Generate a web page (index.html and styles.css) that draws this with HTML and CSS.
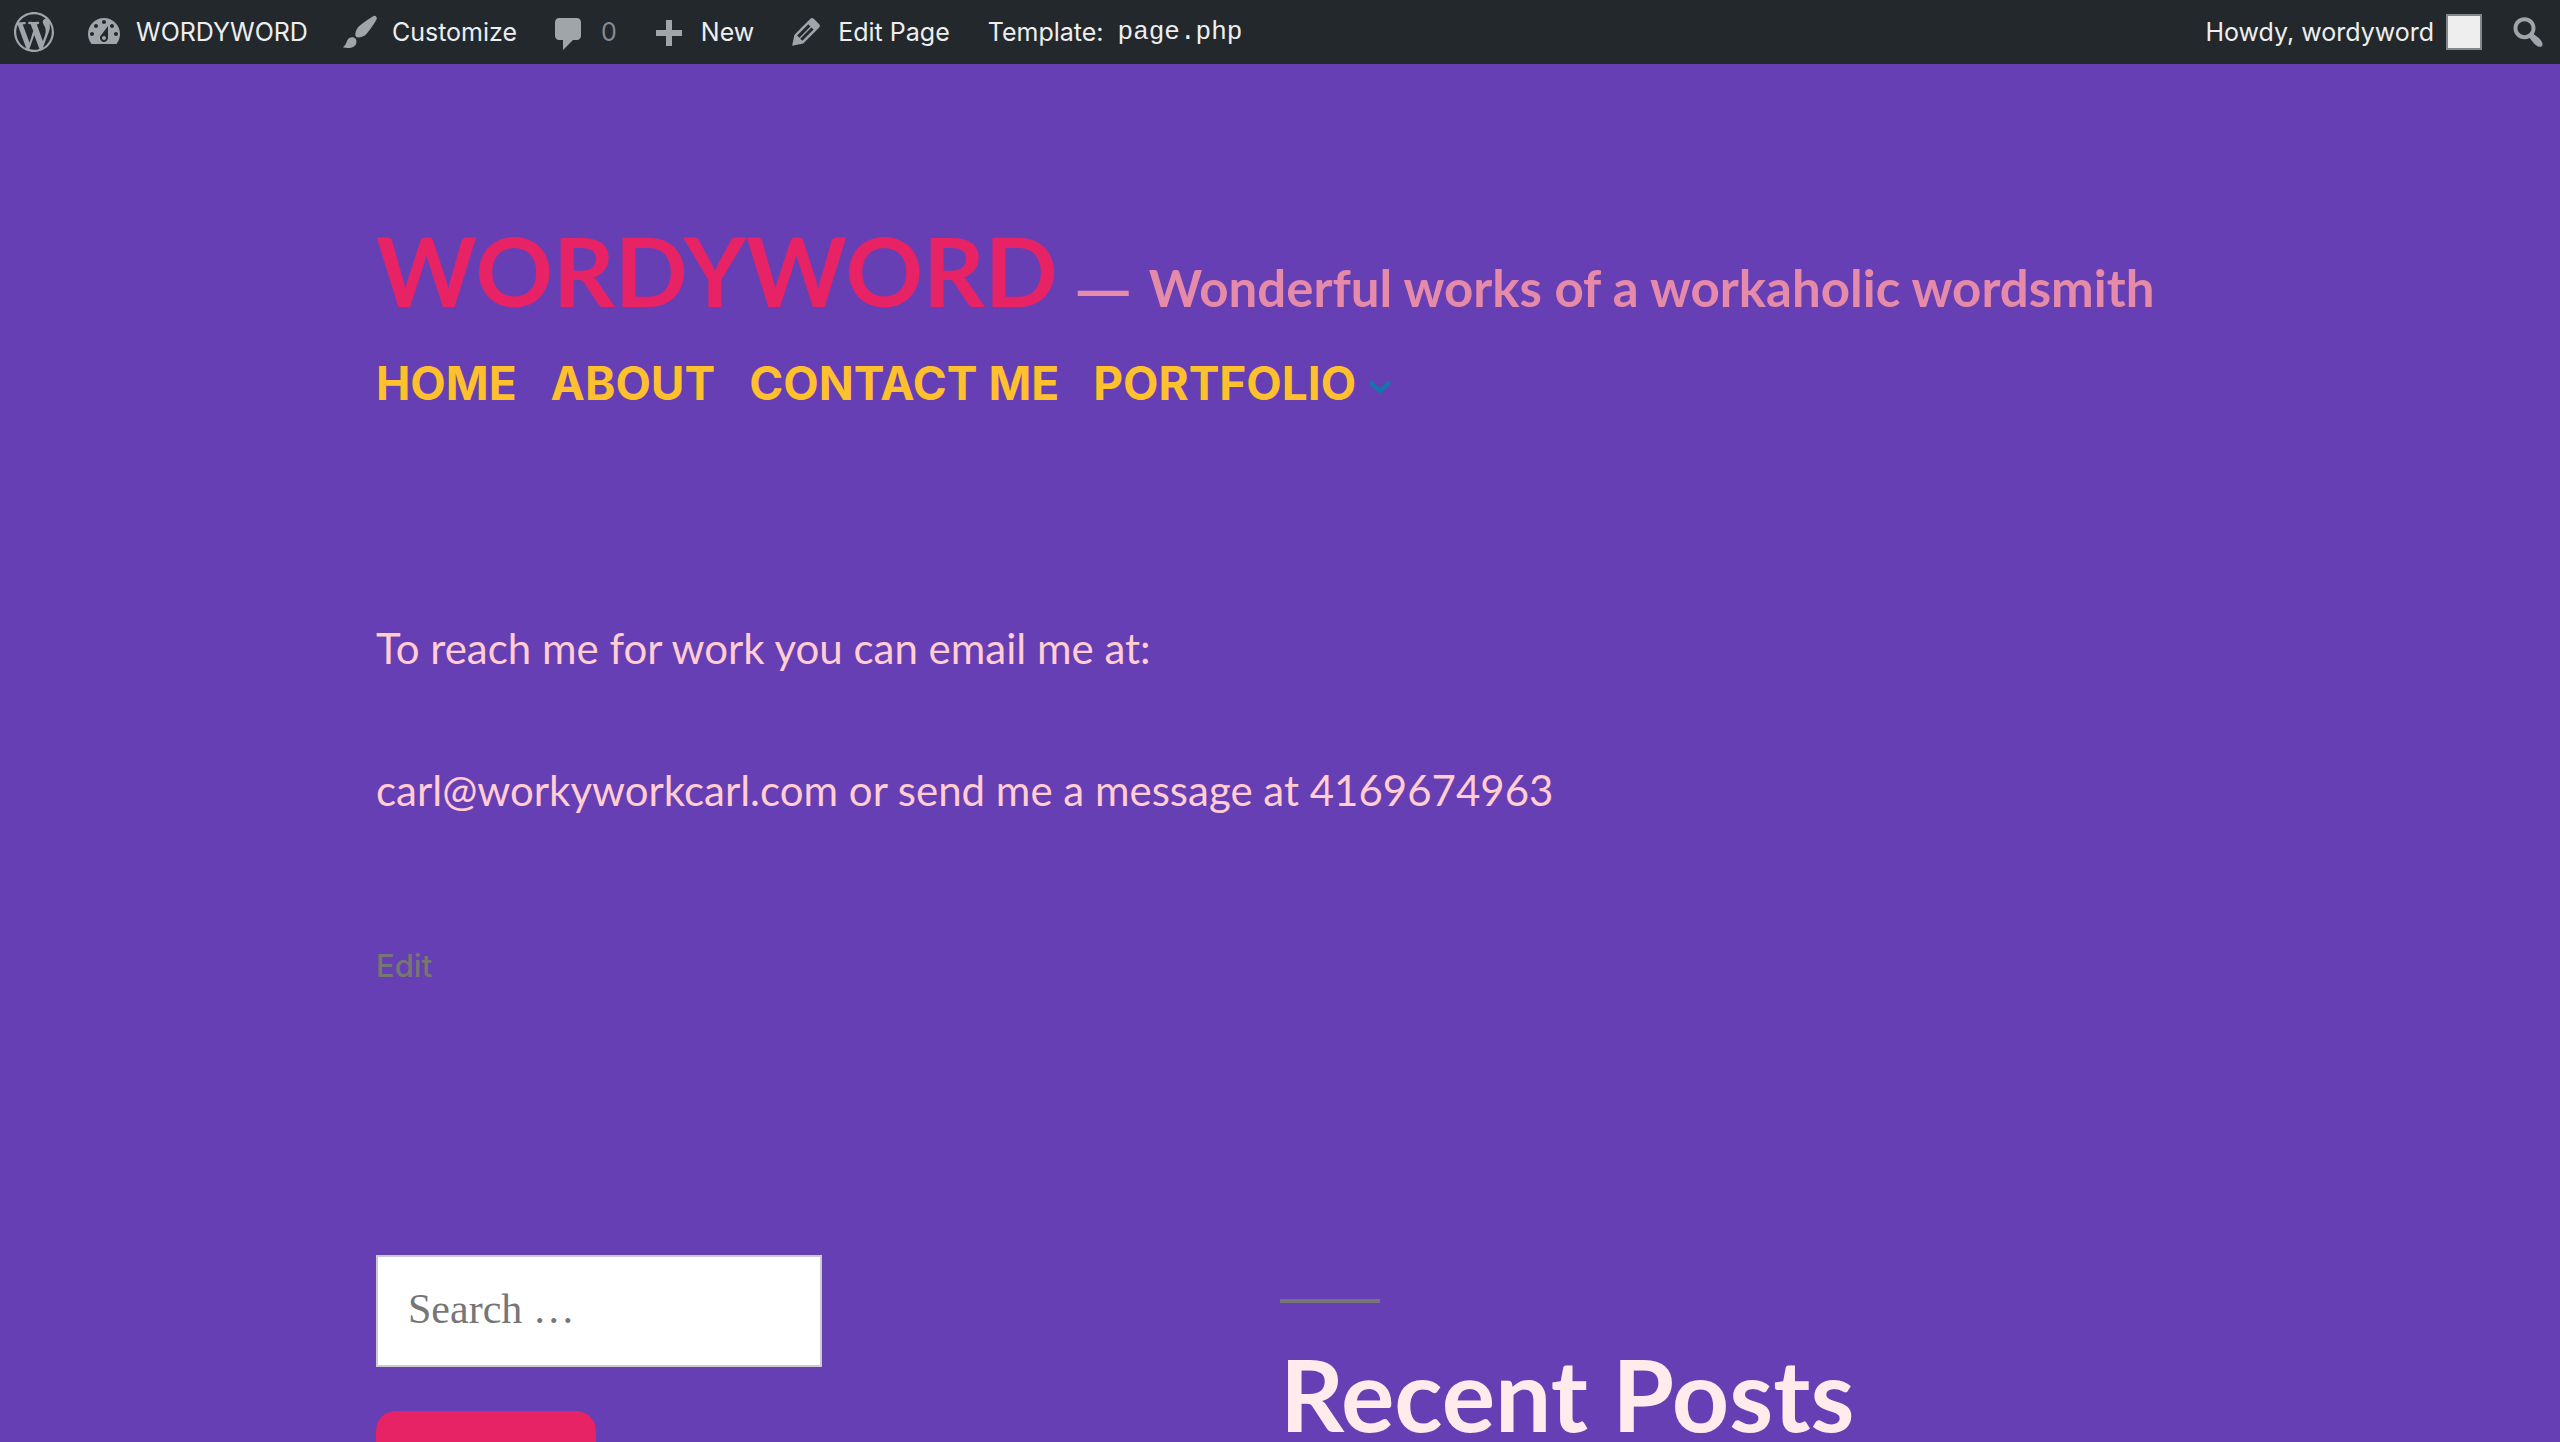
FILE: index.html
```html
<!DOCTYPE html>
<html lang="en">
<head>
<meta charset="utf-8">
<title>Contact Me – WORDYWORD</title>
<link rel="stylesheet" href="styles.css">
</head>
<body>
<nav class="adminbar" aria-label="Toolbar">
  <a class="bar-item logo" href="#" aria-label="About WordPress"><svg class="icon" viewBox="0 0 20 20"><path d="M20 10c0-5.51-4.49-10-10-10C4.48 0 0 4.49 0 10c0 5.52 4.48 10 10 10 5.51 0 10-4.48 10-10zM7.78 15.37L4.37 6.22c.55-.02 1.17-.08 1.17-.08.5-.06.44-1.13-.06-1.11 0 0-1.45.11-2.37.11-.18 0-.37 0-.58-.01C4.12 2.69 6.87 1.11 10 1.11c2.33 0 4.45.87 6.05 2.34-.68-.11-1.65.39-1.65 1.58 0 .74.45 1.36.9 2.1.35.61.55 1.36.55 2.46 0 1.49-1.4 5-1.4 5l-3.03-8.37c.54-.02.82-.17.82-.17.5-.05.44-1.25-.06-1.22 0 0-1.44.12-2.38.12-.87 0-2.33-.12-2.33-.12-.5-.03-.56 1.2-.06 1.22l.92.08 1.26 3.41zM17.41 10c.24-.64.74-1.87.43-4.25.7 1.29 1.05 2.71 1.05 4.25 0 3.29-1.73 6.24-4.4 7.78.97-2.59 1.94-5.2 2.92-7.78zM6.1 18.09C3.12 16.65 1.11 13.53 1.11 10c0-1.3.23-2.48.72-3.59C3.25 10.3 4.67 14.2 6.1 18.09zm4.03-6.63l2.58 6.98c-.86.29-1.76.45-2.71.45-.79 0-1.57-.11-2.29-.33.81-2.38 1.62-4.74 2.42-7.1z"/></svg></a>
  <a class="bar-item" href="#"><svg class="icon" viewBox="0 0 20 20"><path d="M3.76 16h12.48c1.1-1.37 1.76-3.11 1.76-5 0-4.42-3.58-8-8-8s-8 3.58-8 8c0 1.89.66 3.63 1.76 5zM10 4c.55 0 1 .45 1 1s-.45 1-1 1-1-.45-1-1 .45-1 1-1zM6 6c.55 0 1 .45 1 1s-.45 1-1 1-1-.45-1-1 .45-1 1-1zm8 0c.55 0 1 .45 1 1s-.45 1-1 1-1-.45-1-1 .45-1 1-1zm-5.37 5.55L12 7v6c0 1.1-.9 2-2 2s-2-.9-2-2c0-.57.24-1.08.63-1.45zM4 10c.55 0 1 .45 1 1s-.45 1-1 1-1-.45-1-1 .45-1 1-1zm12 0c.55 0 1 .45 1 1s-.45 1-1 1-1-.45-1-1 .45-1 1-1zm-5 3c0-.55-.45-1-1-1s-1 .45-1 1 .45 1 1 1 1-.45 1-1z"/></svg>WORDYWORD</a>
  <a class="bar-item" href="#"><svg class="icon" viewBox="0 0 20 20"><path d="M18.33 3.57s.27-.8-.31-1.36c-.53-.52-1.22-.24-1.22-.24-.61.3-5.76 3.47-7.67 5.57-.86.96-2.06 3.79-1.09 4.82.92.98 3.96-.17 4.79-1 2.06-2.06 5.21-7.17 5.5-7.79zM1.4 17.65c2.37-1.56 1.46-3.41 3.23-4.64.93-.65 2.22-.62 3.08.29.63.67.8 2.57-.16 3.46-1.57 1.45-4 1.55-6.15.89z"/></svg>Customize</a>
  <a class="bar-item comments" href="#"><svg class="icon" viewBox="0 -1 20 20"><path d="M5 2h9c1.1 0 2 .9 2 2v7c0 1.1-.9 2-2 2h-2l-5 5v-5H5c-1.1 0-2-.9-2-2V4c0-1.1.9-2 2-2z"/></svg><span>0</span></a>
  <a class="bar-item" href="#"><svg class="icon" viewBox="0 0 20 20"><path d="M16.500 9v3h-5v5h-3v-5h-5V9h5V4h3v5z"/></svg>New</a>
  <a class="bar-item" href="#"><svg class="icon" viewBox="0 0 20 20"><path d="M13.89 3.39l2.71 2.72c.46.46.42 1.24.03 1.64l-8.01 8.02-5.56 1.16 1.16-5.58s7.6-7.63 7.99-8.03c.39-.39 1.22-.39 1.68.07zm-2.73 2.79l-5.59 5.61 1.11 1.11 5.54-5.65zm-2.97 8.23l5.58-5.6-1.07-1.08-5.59 5.6z"/></svg>Edit Page</a>
  <a class="bar-item template" href="#">Template: <code>page.php</code></a>
  <a class="bar-item account" href="#">Howdy, wordyword<span class="avatar"></span></a>
  <a class="bar-item search" href="#" aria-label="Search"><svg class="icon" viewBox="0 0 20 20"><path d="M12.14 4.18c1.87 1.87 2.11 4.75.72 6.89.12.1.22.21.36.31.2.16.47.36.81.59.34.24.56.39.66.47.42.31.73.57.94.78.32.32.6.65.84 1 .25.35.44.69.59 1.04.14.35.21.68.18 1-.02.32-.14.59-.36.81s-.49.34-.81.36c-.31.02-.65-.04-.99-.19-.35-.14-.7-.34-1.04-.59-.35-.24-.68-.52-1-.84-.21-.21-.47-.52-.77-.93-.1-.13-.25-.35-.47-.66-.22-.32-.4-.57-.56-.78-.16-.2-.29-.35-.44-.5-2.07 1.09-4.69.76-6.44-.98-2.14-2.15-2.14-5.64 0-7.78 2.15-2.15 5.63-2.15 7.78 0zm-1.41 6.36c1.36-1.37 1.36-3.58 0-4.95-1.37-1.37-3.59-1.37-4.95 0-1.37 1.37-1.37 3.58 0 4.95 1.36 1.37 3.58 1.37 4.95 0z"/></svg></a>
</nav>
<div class="site">
  <header class="site-header">
    <div class="branding">
      <h1 class="site-title"><a href="#">WORDYWORD</a></h1>
      <span class="dash">—</span>
      <p class="tagline">Wonderful works of a workaholic wordsmith</p>
    </div>
    <nav class="menu" aria-label="Top Menu">
      <a href="#">HOME</a>
      <a href="#">ABOUT</a>
      <a href="#">CONTACT ME</a>
      <div class="has-children"><a href="#">PORTFOLIO</a><button class="expand" type="button" aria-label="Expand Portfolio"><svg viewBox="0 0 24 14"><path d="M2 2l10 9 10-9" fill="none" stroke="currentColor" stroke-width="4"/></svg></button></div>
    </nav>
  </header>
  <main class="entry">
    <p>To reach me for work you can email me at:</p>
    <p>carl@workyworkcarl.com or send me a message at 4169674963</p>
    <a class="edit-link" href="#">Edit</a>
  </main>
  <aside class="widgets">
    <form class="search-form">
      <input class="search-field" type="search" placeholder="Search …" aria-label="Search for">
      <button class="submit" type="button" aria-label="Search"></button>
    </form>
    <section class="recent">
      <h2>Recent Posts</h2>
    </section>
  </aside>
</div>
</body>
</html>
```
FILE: styles.css
```css
* {
  box-sizing: border-box;
}

body {
  margin: 0;
  background: #673fb4;
  font-family: Lato, sans-serif;
  height: 100vh;
  overflow: hidden;
}

a {
  color: inherit;
  text-decoration: none;
}

p,
h1,
h2 {
  margin: 0;
}

.adminbar {
  display: flex;
  align-items: center;
  height: 64px;
  padding: 0 12px 0 14px;
  background: #23282d;
  color: #eee;
  font: 25px/64px Inter, sans-serif;
}

.bar-item {
  display: flex;
  align-items: center;
  gap: 12px;
  margin-right: 32px;
}

.logo {
  margin-right: 30px;
}

.icon {
  width: 40px;
  height: 40px;
  fill: #a0a5aa;
}

.comments span {
  color: #868b90;
}

.template {
  gap: 14px;
  margin-left: 6px;
}

.template code {
  font: 26px/64px "Liberation Mono", monospace;
}

.account {
  margin-left: auto;
  margin-right: 26px;
}

.avatar {
  width: 36px;
  height: 36px;
  border: 2px solid #82878c;
  background: #eee;
}

.search {
  margin-right: 0;
}

.site {
  padding: 0 376px;
}

.site-header {
  padding-top: 146px;
}

.branding {
  display: flex;
  align-items: baseline;
  gap: 20px;
  line-height: 120px;
}

.site-title {
  color: #e82365;
  font-size: 96px;
  font-weight: 700;
}

.dash,
.tagline {
  color: #e68aaa;
  font-size: 51px;
  font-weight: 700;
}

.dash {
  font-family: "Liberation Sans", sans-serif;
}

.menu {
  display: flex;
  gap: 34px;
  color: #ffc02e;
  font: 700 46px/66px Inter, sans-serif;
}

.has-children {
  display: flex;
  align-items: center;
  gap: 12px;
}

.expand {
  width: 24px;
  padding: 8px 0 0;
  border: 0;
  background: none;
  color: #0e78a8;
}

.expand svg {
  display: block;
}

.entry {
  padding-top: 192px;
  color: #ffcdd2;
  font-size: 42px;
  font-weight: 400;
  line-height: 80px;
}

.entry p {
  margin-bottom: 62px;
}

.edit-link {
  display: block;
  margin-top: 112px;
  color: #767676;
  font: 500 31px/48px Inter, sans-serif;
}

.widgets {
  display: grid;
  grid-template-columns: 1fr 1fr;
  margin-top: 265px;
}

.search-form {
  display: flex;
  flex-direction: column;
  align-items: flex-start;
  gap: 44px;
}

.search-field {
  width: 446px;
  height: 112px;
  padding: 0 30px 4px;
  border: 2px solid #ccc;
  font: 42px "Liberation Serif", serif;
}

.search-field::placeholder {
  color: #767676;
}

.submit {
  width: 220px;
  height: 104px;
  border: 0;
  border-radius: 20px;
  background: #e82365;
}

.recent {
  padding-top: 44px;
}

.recent::before {
  content: "";
  display: block;
  width: 100px;
  height: 4px;
  background: #767676;
}

.recent h2 {
  margin-top: 30px;
  color: #ffebeb;
  font: 700 100px/120px Lato, sans-serif;
}
```
